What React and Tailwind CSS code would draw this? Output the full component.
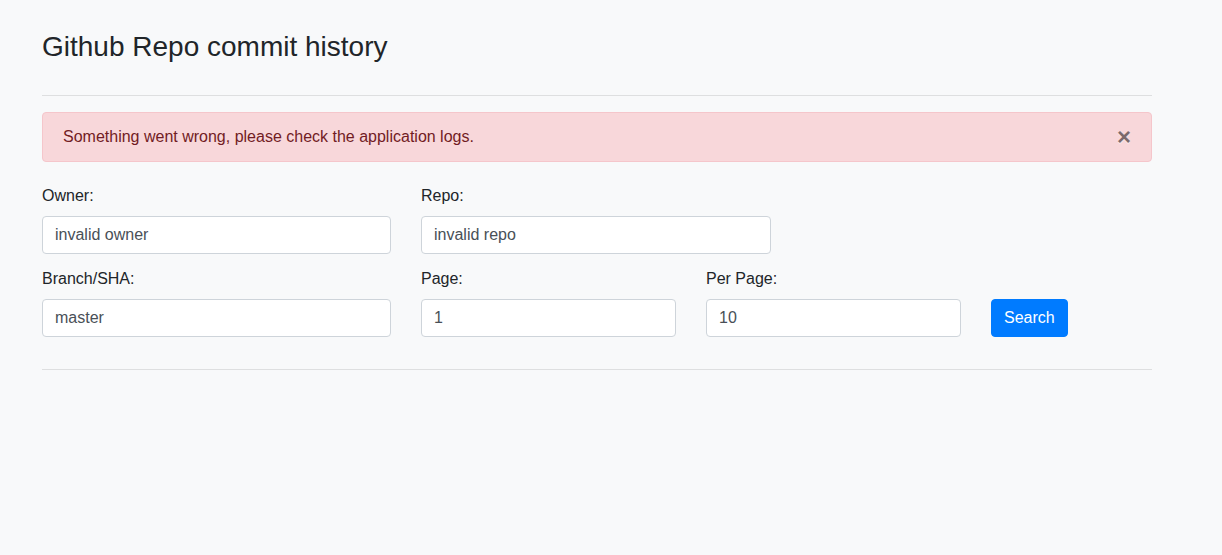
import React from "react";

const FONT = { fontFamily: '"Liberation Sans", Arial, sans-serif' };

function Field({ label, value, width }) {
  return (
    <div className={`${width} flex flex-col`}>
      <label className="text-base leading-6 text-[#212529] mb-2">{label}</label>
      <input
        readOnly
        value={value}
        className="h-[38px] w-full px-3 text-base leading-6 text-[#495057] bg-white border border-[#ced4da] rounded-[4px] outline-none"
      />
    </div>
  );
}

export default function App() {
  return (
    <div className="min-h-screen bg-[#f8f9fa]" style={FONT}>
      <div className="ml-[42px] w-[1110px] pt-[30px]">
        <h3 className="text-[28px] leading-[1.2] font-normal text-[#212529]">Github Repo commit history</h3>

        <hr className="mt-[31px] mb-4 border-0 border-t border-[rgba(0,0,0,0.1)]" />

        <div className="relative h-[50px] flex items-center pl-5 pr-16 bg-[#f8d7da] border border-[#f5c6cb] rounded-[4px] text-[#721c24] text-base leading-6">
          Something went wrong, please check the application logs.
          <button className="absolute right-0 top-0 h-full px-5 text-2xl font-bold leading-none text-black opacity-50 [text-shadow:0_1px_0_#fff]">
            ×
          </button>
        </div>

        <div className="mt-[22px] flex gap-[30px]">
          <Field label="Owner:" value="invalid owner" width="w-[349px]" />
          <Field label="Repo:" value="invalid repo" width="w-[350px]" />
        </div>

        <div className="mt-[13px] flex gap-[30px] items-end">
          <Field label="Branch/SHA:" value="master" width="w-[349px]" />
          <Field label="Page:" value="1" width="w-[255px]" />
          <Field label="Per Page:" value="10" width="w-[255px]" />
          <button className="h-[38px] px-3 text-base leading-6 text-white bg-[#007bff] border border-[#007bff] rounded-[4px]">
            Search
          </button>
        </div>

        <hr className="mt-8 border-0 border-t border-[rgba(0,0,0,0.1)]" />
      </div>
    </div>
  );
}
